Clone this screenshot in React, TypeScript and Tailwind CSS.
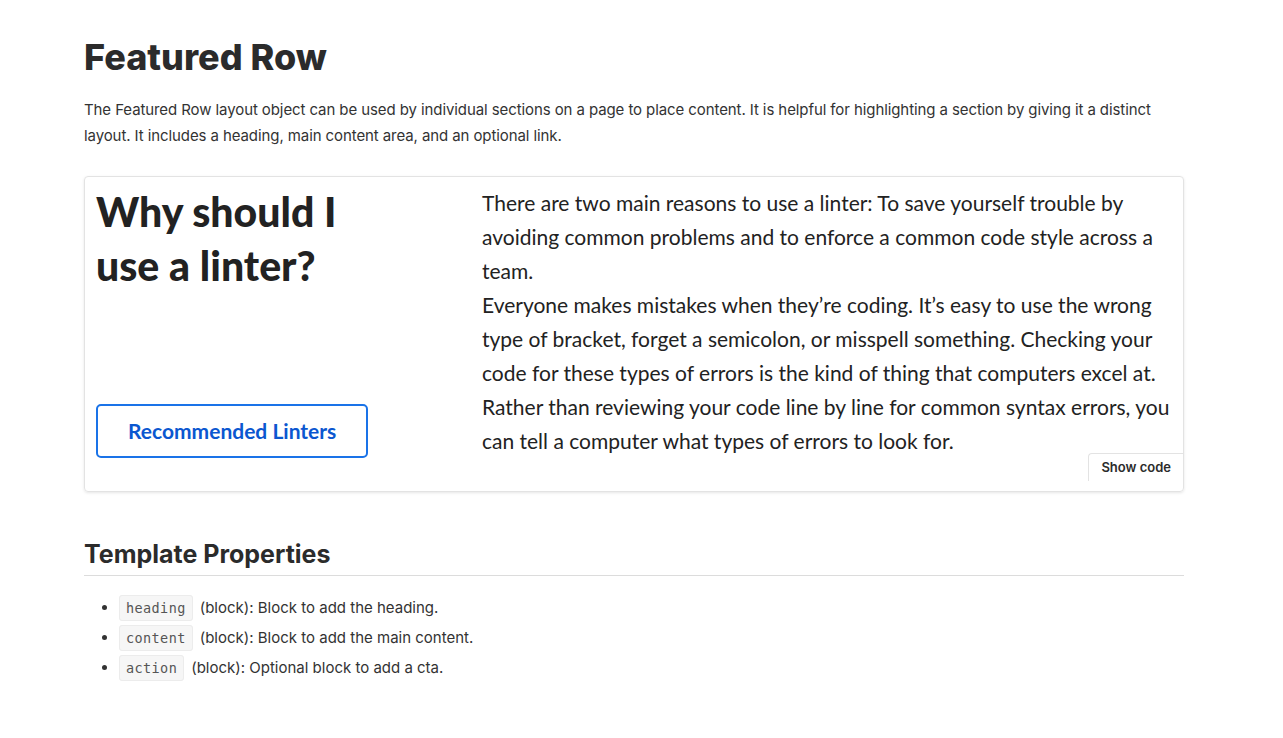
import React from "react";

const props = [
  { name: "heading", text: "(block): Block to add the heading." },
  { name: "content", text: "(block): Block to add the main content." },
  { name: "action", text: "(block): Optional block to add a cta." },
];

const App = () => {
  return (
    <div className="min-h-screen bg-white font-['Inter',sans-serif] text-[#2b2b2b]">
      <div className="ml-[84px] w-[1100px] pt-[35px]">
        <h1 className="text-[36px] font-extrabold leading-[44px]">Featured Row</h1>
        <p className="mt-[18px] text-[15px] leading-[26px] tracking-[-0.09px] text-[#333]">
          The Featured Row layout object can be used by individual sections on a page to place content. It is
          helpful for highlighting a section by giving it a distinct layout. It includes a heading, main content
          area, and an optional link.
        </p>

        <div className="relative mt-[27px] rounded-[4px] border border-[#e3e3e3] px-[11px] pb-[33px] pt-[9px] shadow-[0_1px_3px_rgba(0,0,0,0.1)]">
          <div className="flex gap-[28px] font-['Lato',sans-serif] text-[#222]">
            <div className="flex w-[358px] shrink-0 flex-col justify-between">
              <h2 className="-mt-[1px] text-[41px] font-black leading-[54px]">
                Why should I
                <br />
                use a linter?
              </h2>
              <div>
                <button className="h-[54px] rounded-[5px] border-2 border-[#1a73e8] px-[30px] text-[21px] font-bold text-[#0b57d0]">
                  Recommended Linters
                </button>
              </div>
            </div>
            <div className="flex-1 text-[21px] leading-[34px]">
              <p>
                There are two main reasons to use a linter: To save yourself trouble by avoiding common problems
                and to enforce a common code style across a team.
              </p>
              <p>
                Everyone makes mistakes when they’re coding. It’s easy to use the wrong type of bracket, forget a
                semicolon, or misspell something. Checking your code for these types of errors is the kind of thing
                that computers excel at. Rather than reviewing your code line by line for common syntax errors, you
                can tell a computer what types of errors to look for.
              </p>
            </div>
          </div>
          <button className="absolute bottom-[10px] right-0 h-[28px] rounded-tl-[4px] border-l border-t border-[#e3e3e3] bg-white px-[12px] text-[13px] font-semibold text-[#2b2b2b]">
            Show code
          </button>
        </div>

        <h2 className="mt-[47px] border-b border-[#dcdcdc] pb-[6px] text-[25px] font-bold leading-[30px]">
          Template Properties
        </h2>
        <ul className="mt-[17px] list-disc pl-[35px] text-[15px] text-[#333]">
          {props.map((p) => (
            <li key={p.name} className="h-[30px] leading-[30px] marker:text-[#333]">
              <code className="mr-[7px] rounded-[3px] border border-[#ececec] bg-[#f6f6f6] px-[6px] py-[4px] font-['DejaVu_Sans_Mono',monospace] text-[13.5px] tracking-[0.4px] text-[#555]">
                {p.name}
              </code>
              {p.text}
            </li>
          ))}
        </ul>
      </div>
    </div>
  );
};

export default App;
